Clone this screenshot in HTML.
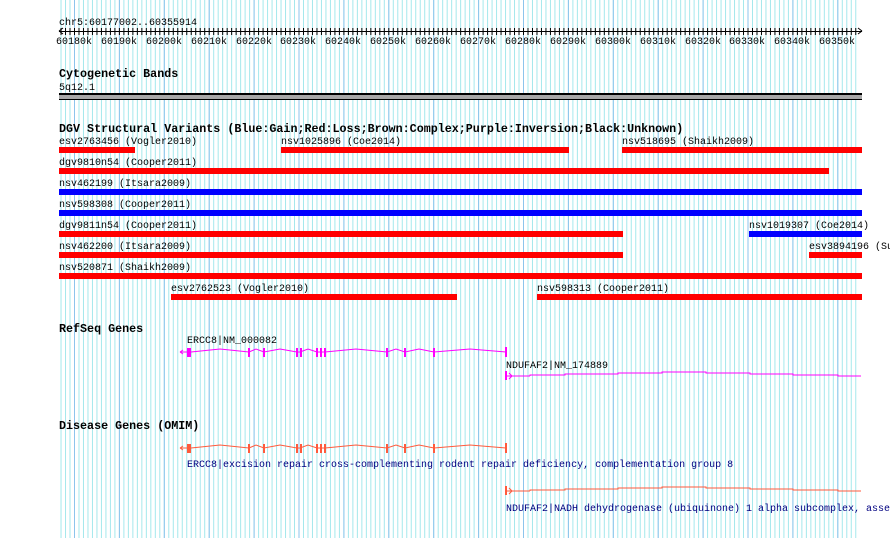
<!DOCTYPE html>
<html><head><meta charset="utf-8"><style>
html,body{margin:0;padding:0;background:#fff;}
svg{display:block;}
text{font-family:"Liberation Mono",monospace;font-size:10px;fill:#000;}
.t{font-weight:bold;font-size:11.7px;}
.b{fill:#000080;}
</style></head><body>
<svg width="890" height="538" xmlns="http://www.w3.org/2000/svg">
<defs>
<pattern id="mn" patternUnits="userSpaceOnUse" x="74" y="0" width="4.49" height="10">
<rect x="0" y="0" width="1" height="10" fill="#a4e8ec"/></pattern>
<pattern id="mj" patternUnits="userSpaceOnUse" x="74" y="0" width="44.9" height="10">
<rect x="0" y="0" width="1" height="10" fill="#8cc4ec"/></pattern>
<pattern id="tk" patternUnits="userSpaceOnUse" x="74" y="0" width="4.49" height="10">
<rect x="0" y="0" width="1" height="10" fill="#000"/></pattern>
</defs>
<rect x="59" y="0" width="799" height="538" fill="url(#mn)"/>
<rect x="59" y="0" width="799" height="538" fill="url(#mj)"/>

<text x="59" y="25">chr5:60177002..60355914</text>
<rect x="59" y="31" width="803" height="1" fill="#000"/>
<rect x="60" y="28" width="798" height="7" fill="url(#tk)"/>
<path d="M59 31 l4 -3 M59 31 l4 3 M862 31 l-4 -3 M862 31 l-4 3" stroke="#000" fill="none"/>
<g text-anchor="middle">
<text x="74" y="44">60180k</text><text x="119" y="44">60190k</text><text x="164" y="44">60200k</text><text x="209" y="44">60210k</text><text x="254" y="44">60220k</text><text x="298" y="44">60230k</text><text x="343" y="44">60240k</text><text x="388" y="44">60250k</text><text x="433" y="44">60260k</text><text x="478" y="44">60270k</text><text x="523" y="44">60280k</text><text x="568" y="44">60290k</text><text x="613" y="44">60300k</text><text x="658" y="44">60310k</text><text x="703" y="44">60320k</text><text x="747" y="44">60330k</text><text x="792" y="44">60340k</text><text x="837" y="44">60350k</text>
</g>

<text class="t" x="59" y="77">Cytogenetic Bands</text>
<text x="59" y="90">5q12.1</text>
<rect x="59" y="93" width="803" height="2" fill="#000"/>
<rect x="59" y="95" width="803" height="4" fill="#a8a8a8"/>
<rect x="59" y="99" width="803" height="1" fill="#000"/>

<text class="t" x="59" y="132">DGV Structural Variants (Blue:Gain;Red:Loss;Brown:Complex;Purple:Inversion;Black:Unknown)</text>
<text x="59" y="144">esv2763456 (Vogler2010)</text><rect x="59" y="147" width="76" height="6" fill="#f00"/>
<text x="281" y="144">nsv1025896 (Coe2014)</text><rect x="281" y="147" width="288" height="6" fill="#f00"/>
<text x="622" y="144">nsv518695 (Shaikh2009)</text><rect x="622" y="147" width="240" height="6" fill="#f00"/>
<text x="59" y="165">dgv9810n54 (Cooper2011)</text><rect x="59" y="168" width="770" height="6" fill="#f00"/>
<text x="59" y="186">nsv462199 (Itsara2009)</text><rect x="59" y="189" width="803" height="6" fill="#00f"/>
<text x="59" y="207">nsv598308 (Cooper2011)</text><rect x="59" y="210" width="803" height="6" fill="#00f"/>
<text x="59" y="228">dgv9811n54 (Cooper2011)</text><rect x="59" y="231" width="564" height="6" fill="#f00"/>
<text x="749" y="228">nsv1019307 (Coe2014)</text><rect x="749" y="231" width="113" height="6" fill="#00f"/>
<text x="59" y="249">nsv462200 (Itsara2009)</text><rect x="59" y="252" width="564" height="6" fill="#f00"/>
<text x="809" y="249">esv3894196 (Su</text><rect x="809" y="252" width="53" height="6" fill="#f00"/>
<text x="59" y="270">nsv520871 (Shaikh2009)</text><rect x="59" y="273" width="803" height="6" fill="#f00"/>
<text x="171" y="291">esv2762523 (Vogler2010)</text><rect x="171" y="294" width="286" height="6" fill="#f00"/>
<text x="537" y="291">nsv598313 (Cooper2011)</text><rect x="537" y="294" width="325" height="6" fill="#f00"/>

<text class="t" x="59" y="332">RefSeq Genes</text>
<text x="187" y="343">ERCC8|NM_000082</text>
<g stroke="#f0f" fill="#f0f">
<path d="M180 352 H187 M180 352 l3 -2 M180 352 l3 2" fill="none"/>
<polyline fill="none" points="191,352 220,349 249,352 256,349 264,352 280,349 297,352 300,352 308,349 317,352 325,352 356,349 387,352 396,349 405,352 419,349 434,352 470,349 506,352"/>
<rect x="187" y="348" width="4" height="9" stroke="none"/>
<rect x="248" y="348" width="2" height="9" stroke="none"/><rect x="263" y="348" width="2" height="9" stroke="none"/>
<rect x="296" y="348" width="2" height="9" stroke="none"/><rect x="300" y="348" width="2" height="9" stroke="none"/>
<rect x="316" y="348" width="2" height="9" stroke="none"/><rect x="320" y="348" width="2" height="9" stroke="none"/><rect x="324" y="348" width="2" height="9" stroke="none"/>
<rect x="386" y="348" width="2" height="9" stroke="none"/><rect x="404" y="348" width="2" height="9" stroke="none"/>
<rect x="433" y="348" width="2" height="9" stroke="none"/><rect x="505" y="347" width="2" height="10" stroke="none"/>
</g>
<text x="506" y="368">NDUFAF2|NM_174889</text>
<g stroke="#f0f" fill="none">
<rect x="505" y="371" width="2" height="9" fill="#f0f" stroke="none"/>
<path d="M507 376 H530 M509 373 l3 3 l-3 3"/>
<polyline points="530,376 530,375 565,375 565,374 618,374 618,373 662,373 662,372 706,372 706,373 750,373 750,374 793,374 793,375 838,375 838,376 861,376"/>
</g>

<text class="t" x="59" y="429">Disease Genes (OMIM)</text>
<g stroke="#ff5a3c" fill="#ff5a3c" transform="translate(0,96)">
<path d="M180 352 H187 M180 352 l3 -2 M180 352 l3 2" fill="none"/>
<polyline fill="none" points="191,352 220,349 249,352 256,349 264,352 280,349 297,352 300,352 308,349 317,352 325,352 356,349 387,352 396,349 405,352 419,349 434,352 470,349 506,352"/>
<rect x="187" y="348" width="4" height="9" stroke="none"/>
<rect x="248" y="348" width="2" height="9" stroke="none"/><rect x="263" y="348" width="2" height="9" stroke="none"/>
<rect x="296" y="348" width="2" height="9" stroke="none"/><rect x="300" y="348" width="2" height="9" stroke="none"/>
<rect x="316" y="348" width="2" height="9" stroke="none"/><rect x="320" y="348" width="2" height="9" stroke="none"/><rect x="324" y="348" width="2" height="9" stroke="none"/>
<rect x="386" y="348" width="2" height="9" stroke="none"/><rect x="404" y="348" width="2" height="9" stroke="none"/>
<rect x="433" y="348" width="2" height="9" stroke="none"/><rect x="505" y="347" width="2" height="10" stroke="none"/>
</g>
<text class="b" x="187" y="467">ERCC8|excision repair cross-complementing rodent repair deficiency, complementation group 8</text>
<g stroke="#ff5a3c" fill="none" transform="translate(0,115)">
<rect x="505" y="371" width="2" height="9" fill="#ff5a3c" stroke="none"/>
<path d="M507 376 H530 M509 373 l3 3 l-3 3"/>
<polyline points="530,376 530,375 565,375 565,374 618,374 618,373 662,373 662,372 706,372 706,373 750,373 750,374 793,374 793,375 838,375 838,376 861,376"/>
</g>
<text class="b" x="506" y="511">NDUFAF2|NADH dehydrogenase (ubiquinone) 1 alpha subcomplex, asse</text>
</svg>
</body></html>
